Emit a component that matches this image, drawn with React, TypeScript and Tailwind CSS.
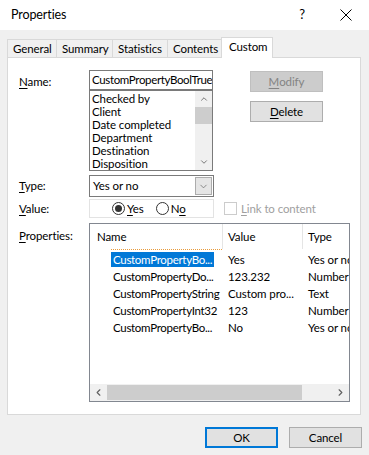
import { ChevronDown, ChevronUp, ChevronLeft, ChevronRight } from 'lucide-react'

const font = { fontFamily: 'Lato, "Noto Sans", sans-serif' }

const listItems = ['Checked by', 'Client', 'Date completed', 'Department', 'Destination', 'Disposition']

const rows = [
  { name: 'CustomPropertyBo...', value: 'Yes', type: 'Yes or no', selected: true },
  { name: 'CustomPropertyDo...', value: '123.232', type: 'Number' },
  { name: 'CustomPropertyString', value: 'Custom pro...', type: 'Text' },
  { name: 'CustomPropertyInt32', value: '123', type: 'Number' },
  { name: 'CustomPropertyBo...', value: 'No', type: 'Yes or no' },
]

function U({ c }: { c: string }) {
  return <span className="underline underline-offset-2">{c}</span>
}

export default function App() {
  return (
    <div style={font} className="w-[369px] h-[455px] bg-[#f0f0f0] text-[11.5px] tracking-[-0.1px] text-black overflow-hidden flex flex-col">
      <div className="h-[30px] bg-white flex items-center pl-[11px] shrink-0">
        <span className="flex-1 text-[12.5px]">Properties</span>
        <span className="w-[20px] text-center text-[13px] mr-[28px]">?</span>
        <svg width="12" height="12" viewBox="0 0 12 12" className="mr-[17px]">
          <path d="M0.5 0.5 L11.5 11.5 M11.5 0.5 L0.5 11.5" stroke="#000" strokeWidth="1" />
        </svg>
      </div>

      <div className="pl-[7px] pt-[10px] flex items-end h-[27px] shrink-0">
        <div className="w-[49px] h-[18px] pl-[5px] bg-[#f0f0f0] border border-r-0 border-b-0 border-[#d9d9d9] leading-[17px]">General</div>
        <div className="w-[56px] h-[18px] pl-[5px] bg-[#f0f0f0] border border-r-0 border-b-0 border-[#d9d9d9] leading-[17px]">Summary</div>
        <div className="w-[55px] h-[18px] pl-[5px] bg-[#f0f0f0] border border-r-0 border-b-0 border-[#d9d9d9] leading-[17px]">Statistics</div>
        <div className="w-[55px] h-[18px] pl-[5px] bg-[#f0f0f0] border border-b-0 border-[#d9d9d9] leading-[17px]">Contents</div>
        <div className="relative z-10 -mb-px -ml-px w-[52px] h-[21px] pl-[7px] bg-white border border-b-0 border-[#d9d9d9] leading-[18px]">Custom</div>
      </div>

      <div className="ml-[7px] w-[354px] h-[358px] bg-white border border-[#d9d9d9] pl-[11px] pt-[12px] shrink-0">
        <div className="flex">
          <div className="w-[70px] pt-[3px]"><U c="N" />ame:</div>
          <div className="w-[124px]">
            <div className="h-[20px] border border-[#7a7a7a] pl-[2px] leading-[18px] tracking-[-0.35px] whitespace-nowrap overflow-hidden">
              CustomPropertyBoolTrue
            </div>
            <div className="h-[81px] border border-[#7a7a7a] flex">
              <div className="flex-1 pl-[2px] pt-[1px] leading-[13px] overflow-hidden">
                {listItems.map(i => <div key={i} className="whitespace-nowrap">{i}</div>)}
              </div>
              <div className="w-[17px] bg-[#f0f0f0] flex flex-col items-center">
                <ChevronUp size={10} strokeWidth={2} className="text-[#606060] mt-[3px] mb-[3px]" />
                <div className="w-[17px] h-[17px] bg-[#cdcdcd]" />
                <div className="flex-1" />
                <ChevronDown size={10} strokeWidth={2} className="text-[#606060] mb-[3px]" />
              </div>
            </div>
          </div>
          <div className="ml-[37px] flex flex-col pt-[1px]">
            <div className="w-[73px] h-[21px] bg-[#cccccc] border border-[#bfbfbf] text-[#838383] flex items-center justify-center">
              <U c="M" />odify
            </div>
            <div className="mt-[9px] w-[73px] h-[21px] bg-[#e1e1e1] border border-[#adadad] flex items-center justify-center">
              <U c="D" />elete
            </div>
          </div>
        </div>

        <div className="flex mt-[4px] items-center">
          <div className="w-[70px]"><U c="T" />ype:</div>
          <div className="w-[125px] h-[22px] border border-[#7a7a7a] flex items-center pl-[3px]">
            <span className="flex-1">Yes or no</span>
            <div className="w-[17px] h-[18px] mr-[1px] bg-[#e5e5e5] border border-[#acacac] flex items-center justify-center">
              <ChevronDown size={11} strokeWidth={1.5} className="text-[#606060]" />
            </div>
          </div>
        </div>

        <div className="flex mt-[2px] items-center">
          <div className="w-[70px]"><U c="V" />alue:</div>
          <div className="w-[125px] h-[19px] border border-[#e3e3e3] flex items-center pl-[22px]">
            <div className="w-[13px] h-[13px] rounded-full border border-[#333] flex items-center justify-center">
              <div className="w-[7px] h-[7px] rounded-full bg-[#333]" />
            </div>
            <span className="ml-[2px]"><U c="Y" />es</span>
            <div className="ml-[12px] w-[13px] h-[13px] rounded-full border border-[#333]" />
            <span className="ml-[2px]">N<U c="o" /></span>
          </div>
          <div className="ml-[10px] w-[13px] h-[13px] border border-[#cccccc]" />
          <span className="ml-[4px] text-[#a0a0a0]"><U c="L" />ink to content</span>
        </div>

        <div className="flex mt-[5px]">
          <div className="w-[70px] pt-[4px]"><U c="P" />roperties:</div>
          <div className="w-[261px] h-[179px] border border-[#828790] flex flex-col">
            <div className="h-[25px] flex shrink-0 leading-[25px]">
              <div className="w-[133px] pl-[7px] border-r border-[#e5e5e5]">Name</div>
              <div className="w-[80px] pl-[5px] border-r border-[#e5e5e5]">Value</div>
              <div className="flex-1 pl-[5px] whitespace-nowrap overflow-hidden">Type</div>
            </div>
            <div className="flex-1 pt-[2px] relative">
              <div className="absolute left-[21px] top-0 w-[111px] border-t border-dotted border-[#e89b3c]" />
              {rows.map((r, i) => (
                <div key={i} className="h-[17px] flex items-center whitespace-nowrap">
                  <div className="w-[133px] pl-[21px] pr-[1px] overflow-hidden tracking-[-0.3px]">
                    <span className={r.selected ? 'bg-[#0078d7] text-white px-[2px] py-[1px]' : 'pl-[2px]'}>{r.name}</span>
                  </div>
                  <div className="w-[80px] pl-[5px] overflow-hidden">{r.value}</div>
                  <div className="flex-1 pl-[5px] overflow-hidden">{r.type}</div>
                </div>
              ))}
            </div>
            <div className="h-[17px] bg-[#f0f0f0] flex items-center shrink-0">
              <div className="w-[17px] flex justify-center">
                <ChevronLeft size={11} strokeWidth={2.5} className="text-[#606060]" />
              </div>
              <div className="w-[195px] h-[15px] bg-[#cdcdcd]" />
              <div className="flex-1" />
              <div className="w-[17px] flex justify-center">
                <ChevronRight size={11} strokeWidth={2.5} className="text-[#606060]" />
              </div>
            </div>
          </div>
        </div>
      </div>

      <div className="flex justify-end pr-[7px] mt-[12px] gap-[11px]">
        <div className="w-[73px] h-[21px] bg-[#e1e1e1] border-2 border-[#0078d7] flex items-center justify-center">OK</div>
        <div className="w-[73px] h-[21px] bg-[#e1e1e1] border border-[#adadad] flex items-center justify-center">Cancel</div>
      </div>
    </div>
  )
}
